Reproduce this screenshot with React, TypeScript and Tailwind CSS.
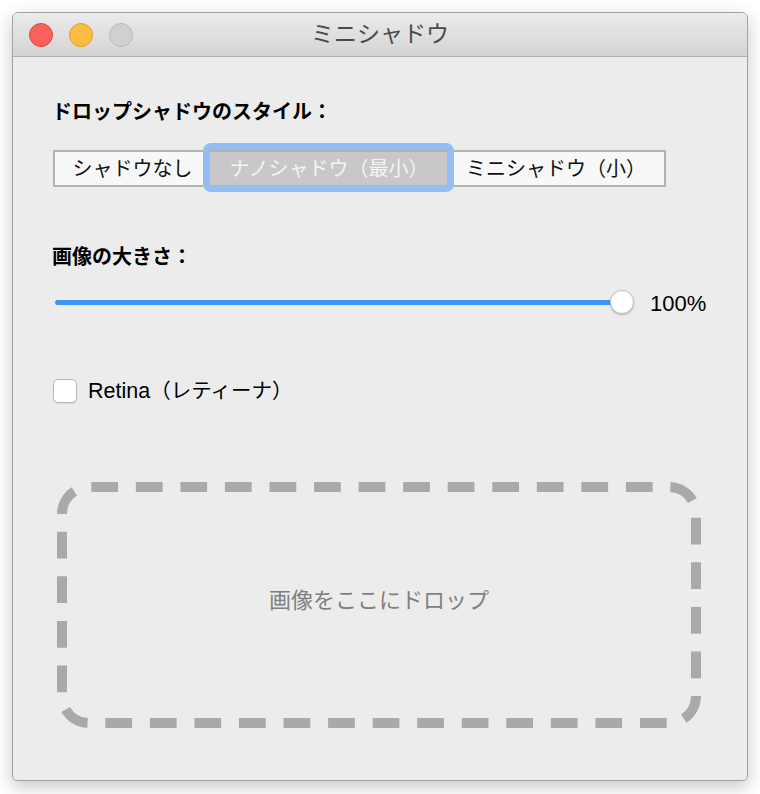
import React from "react";

const JP = { fontFamily: '"Liberation Sans", "Noto Sans CJK JP", sans-serif' };

export default function App() {
  return (
    <div className="w-[760px] h-[794px] bg-white pt-[12px] pl-[12px]" style={JP}>
      <div className="w-[736px] h-[769px] flex flex-col border border-[#a3a3a3] rounded-t-[6px] rounded-b-[5px] bg-[#ececec] shadow-[0_6px_18px_rgba(0,0,0,0.22)] overflow-hidden">
        {/* Title bar */}
        <div className="relative h-[44px] shrink-0 flex items-center pl-[16px] gap-[16px] bg-gradient-to-b from-[#ebebeb] to-[#d4d4d4] border-b border-[#b1b1b1]">
          <span className="w-[24px] h-[24px] rounded-full bg-[#fc605c] border border-[#e0443e]" />
          <span className="w-[24px] h-[24px] rounded-full bg-[#fdbc40] border border-[#dea123]" />
          <span className="w-[24px] h-[24px] rounded-full bg-[#d0d0d0] border border-[#b9b9b9]" />
          <div className="absolute inset-0 flex items-center justify-center text-[23px] leading-none text-[#4a4a4a] pointer-events-none">
            ミニシャドウ
          </div>
        </div>

        {/* Body */}
        <div className="flex flex-col pl-[39px]">
          <div className="mt-[43px] h-[24px] leading-[24px] text-[20px] font-bold text-black">
            ドロップシャドウのスタイル：
          </div>

          <div className="mt-[26px] ml-[1px] relative flex w-[613px] h-[37px] border-2 border-[#b2b2b2] bg-[#f8f8f8] text-[20px] leading-none">
            <div className="w-[155px] flex items-center justify-center text-[#111]">シャドウなし</div>
            <div className="w-[238px] flex items-center justify-center bg-[#c8c8c8] text-[#f4f4f4]">
              ナノシャドウ（最小）
            </div>
            <div className="w-[216px] flex items-center justify-center text-[#111]">ミニシャドウ（小）</div>
            <span className="absolute left-[148px] top-[-9px] w-[251px] h-[49px] rounded-[8px] border-[7px] border-[#92bef3] pointer-events-none" />
          </div>

          <div className="mt-[58px] h-[24px] leading-[24px] text-[20px] font-bold text-black">
            画像の大きさ：
          </div>

          <div className="mt-[21px] h-[24px] flex items-center ml-[3px]">
            <div className="relative w-[579px] h-[24px] flex items-center">
              <div className="w-[567px] h-[5px] rounded-full bg-[#3d94f6]" />
              <span className="absolute right-0 top-[0px] w-[24px] h-[24px] rounded-full bg-white border border-[#c4c4c4] shadow-[0_1px_2px_rgba(0,0,0,0.25)]" />
            </div>
            <span className="ml-[16px] mt-[3px] text-[22px] leading-none text-black">100%</span>
          </div>

          <div className="mt-[65px] h-[24px] flex items-center ml-[1px]">
            <span className="w-[24px] h-[24px] rounded-[5px] bg-white border border-[#b8b8b8] shadow-[0_1px_1px_rgba(0,0,0,0.08)]" />
            <span className="ml-[11px] mt-[2px] leading-none text-black">
              <span className="text-[21.5px]">Retina</span>
              <span className="text-[20.5px]">（レティーナ）</span>
            </span>
          </div>

          <div className="mt-[79px] ml-[5px] relative w-[644px] h-[246px] flex items-center justify-center">
            <svg className="absolute inset-0" width="644" height="246" viewBox="0 0 644 246">
              <path
                d="M5,32 A27,27 0 0 1 32,5 H612 A27,27 0 0 1 639,32 V214 A27,27 0 0 1 612,241 H32 A27,27 0 0 1 5,214 Z"
                fill="none"
                stroke="#a9a9a9"
                strokeWidth="10"
                pathLength={1710}
                strokeDasharray="27 18"
              />
            </svg>
            <span className="relative -mt-[8px] text-[22px] leading-none text-[#7f7f7f]">画像をここにドロップ</span>
          </div>
        </div>
      </div>
    </div>
  );
}
